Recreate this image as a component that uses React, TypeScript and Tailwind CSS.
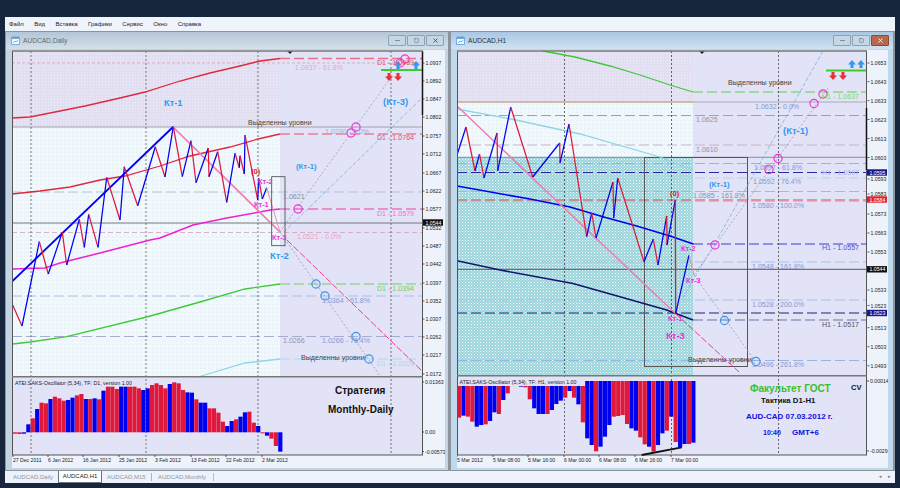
import React from 'react';
import { Minus, Square, X } from 'lucide-react';

type Pt = [number, number];
type Level = [number, string, string?, number?];
type Label = [number, number, string, string, number?, boolean?];
type Bar = [string, number];

const BLUE = '#0000ee';
const RED = '#e0183c';
const MAGENTA = '#f030d8';
const SKY = '#3399ee';
const FIB = '#8299d4';
const DASH = '10 4';
const BAR_STEP = 4.42;

const pts = (p: Pt[]) => p.map((q) => q.join(',')).join(' ');

const Curve = ({ p, color, w = 1.3, dash }: { p: Pt[]; color: string; w?: number; dash?: string }) => (
  <polyline points={pts(p)} fill="none" stroke={color} strokeWidth={w} strokeDasharray={dash} />
);

const Zigzag = ({ p }: { p: Pt[] }) => (
  <g>
    {p.slice(1).map((q, i) => (
      <line
        key={i}
        x1={p[i][0]}
        y1={p[i][1]}
        x2={q[0]}
        y2={q[1]}
        stroke={q[1] < p[i][1] ? BLUE : RED}
        strokeWidth={1.25}
      />
    ))}
  </g>
);

const Levels = ({ items, x1, x2 }: { items: Level[]; x1: number; x2: number }) => (
  <g>
    {items.map(([y, color, dash, w], i) => (
      <line key={i} x1={x1} y1={y} x2={x2} y2={y} stroke={color} strokeDasharray={dash} strokeWidth={w ?? 1} />
    ))}
  </g>
);

const Labels = ({ items }: { items: Label[] }) => (
  <g>
    {items.map(([x, y, text, color, size, bold], i) => (
      <text key={i} x={x} y={y} fill={color} fontSize={size ?? 7.1} fontWeight={bold ? 700 : 400} dominantBaseline="central">
        {text}
      </text>
    ))}
  </g>
);

const Rings = ({ items, color }: { items: Pt[]; color: string }) => (
  <g>
    {items.map(([x, y], i) => (
      <circle key={i} cx={x} cy={y} r={4.1} fill="none" stroke={color} strokeWidth={1.2} />
    ))}
  </g>
);

const Arrow = ({ x, y, color, down }: { x: number; y: number; color: string; down?: boolean }) => (
  <path
    d={
      down
        ? `M${x - 1.5} ${y - 4}h3v3.5h2.5l-4 4.5l-4-4.5h2.5z`
        : `M${x - 1.5} ${y + 4}h3v-3.5h2.5l-4-4.5l-4 4.5h2.5z`
    }
    fill={color}
  />
);

const AxisTicks = ({ x, items }: { x: number; items: [string, number][] }) => (
  <g>
    {items.map(([text, y]) => (
      <g key={text}>
        <line x1={x - 3} x2={x - 1} y1={y} y2={y} stroke="#333" strokeWidth={0.8} />
        <text x={x} y={y} fontSize={5.2} fill="#222" dominantBaseline="central">
          {text}
        </text>
      </g>
    ))}
  </g>
);

const TimeAxis = ({ y, items }: { y: number; items: [string, number][] }) => (
  <g>
    {items.map(([text, x]) => (
      <g key={text}>
        <line x1={x} x2={x} y1={y - 5} y2={y - 3} stroke="#333" strokeWidth={0.8} />
        <text x={x} y={y} fontSize={5.1} fill="#222" dominantBaseline="central">
          {text}
        </text>
      </g>
    ))}
  </g>
);

const PriceTag = ({ x, y, text, color }: { x: number; y: number; text: string; color: string }) => (
  <g>
    <rect x={x} y={y - 3.2} width={20} height={6.4} fill={color} />
    <text x={x + 2.5} y={y} fontSize={5.2} fill="#fff" dominantBaseline="central">
      {text}
    </text>
  </g>
);

const DitherDefs = ({ id }: { id: string }) => (
  <defs>
    <pattern id={`${id}-teal`} width="3" height="3" patternUnits="userSpaceOnUse">
      <rect width="3" height="3" fill="#9ad4dc" />
      <rect width="1" height="1" fill="#ffffff" />
      <rect x="1.5" y="1.5" width="1" height="1" fill="#e4f5f2" />
    </pattern>
    <pattern id={`${id}-purple`} width="3" height="3" patternUnits="userSpaceOnUse">
      <rect width="3" height="3" fill="#e2dff2" />
      <rect width="1" height="1" fill="#f0eef8" />
    </pattern>
    <pattern id={`${id}-pale`} width="4" height="4" patternUnits="userSpaceOnUse">
      <rect width="4" height="4" fill="#f1f8fc" />
      <rect width="1" height="1" fill="#dfeaf2" />
    </pattern>
  </defs>
);

const dailyZigzag: Pt[] = [
  [12.7, 305], [22, 326], [39.3, 241.7], [48.3, 274], [62.3, 232.3], [66.7, 265], [79.3, 219.3], [84.3, 247.3],
  [88.7, 214.3], [98, 247.3], [106.7, 177.3], [120, 220], [124.3, 166.7], [137.7, 205.7], [155.3, 146.7], [165, 177],
  [173.3, 126.7], [182.3, 176.7], [191, 140.7], [196, 182.7], [208.3, 148], [209, 176.7], [217.7, 151.7], [226.7, 202.3],
  [235, 153.3], [239.3, 167.7], [240, 155.7], [244.3, 174], [245, 135], [257.7, 200], [258.7, 178.3], [262.3, 199], [266.7, 187.7],
];

const hourZigzag: Pt[] = [
  [457, 155], [466, 127], [475, 171], [479.5, 154], [484, 178], [497, 133], [497.7, 171], [510.7, 107], [532.7, 177],
  [559.7, 143], [560, 163], [569, 124], [586.7, 236.7], [591.7, 213], [596, 238], [613, 182], [613.7, 218], [617.7, 178],
  [644, 261.7], [653.3, 239], [658, 265], [666.7, 216], [667, 245], [675.3, 200], [675.7, 313.3], [689, 255],
];

const R = RED;
const B = BLUE;

const dailyBars: Bar[] = [
  [R, 581], [R, 582], [B, 581], [B, 553], [R, 535], [B, 507], [R, 488], [R, 490], [B, 477], [R, 470], [R, 475], [R, 482],
  [B, 480], [B, 473], [R, 466], [R, 462], [B, 477], [R, 477], [B, 475], [R, 478], [B, 452], [R, 440], [R, 440], [R, 447],
  [B, 440], [B, 440], [R, 440], [R, 440], [R, 445], [B, 450], [B, 445], [R, 435], [R, 430], [R, 435], [R, 445], [B, 432],
  [R, 427], [R, 430], [R, 450], [B, 457], [B, 458], [R, 478], [B, 488], [B, 488], [R, 505], [R, 505], [R, 518], [R, 545],
  [B, 558], [B, 543], [R, 538], [B, 530], [B, 517], [R, 515], [R, 548], [B, 558], [R, 580], [B, 587], [R, 596], [R, 618], [B, 635],
];

const hourBars: Bar[] = [
  [R, 533], [B, 527], [R, 530], [R, 545], [B, 560], [B, 555], [R, 553], [B, 543], [B, 517], [R, 522], [B, 480], [R, 460],
  [R, 425], [B, 436], [B, 440], [R, 442], [R, 478], [B, 505], [B, 522], [B, 522], [R, 522], [B, 510], [B, 492], [B, 482],
  [R, 473], [B, 453], [R, 473], [B, 493], [R, 547], [B, 595], [B, 615], [R, 634], [B, 620], [B, 590], [B, 555], [R, 530],
  [R, 528], [R, 525], [R, 552], [B, 565], [B, 572], [R, 592], [R, 613], [B, 620], [R, 635], [B, 615], [B, 580], [R, 572],
  [B, 530], [R, 606], [B, 622], [B, 612], [R, 612], [B, 608],
];

const dailyPrices: [string, number][] = [
  ['1.0937', 63], ['1.0892', 81], ['1.0847', 99], ['1.0802', 117], ['1.0757', 136], ['1.0712', 154], ['1.0667', 173],
  ['1.0622', 191], ['1.0577', 209], ['1.0532', 228], ['1.0487', 246], ['1.0442', 264], ['1.0397', 283], ['1.0352', 301],
  ['1.0307', 319], ['1.0262', 337], ['1.0217', 355], ['1.0172', 374],
];

const hourPrices: [string, number][] = [
  ['1.0653', 63], ['1.0643', 81.7], ['1.0633', 100.7], ['1.0623', 119.5], ['1.0613', 138.5], ['1.0603', 157.5],
  ['1.0593', 179], ['1.0583', 194], ['1.0573', 214], ['1.0563', 233], ['1.0553', 252], ['1.0533', 290], ['1.0523', 305.5],
  ['1.0513', 327.7], ['1.0503', 346.7], ['1.0493', 365.7],
];

const DailyChart = () => (
  <svg viewBox="12 50 433 418" width={433} height={418} className="block shrink-0">
    <DitherDefs id="d" />
    <rect x="12" y="50" width="433" height="418" fill="#eef2fb" />
    <rect x="12" y="51" width="268" height="76" fill="url(#d-purple)" />
    <rect x="12" y="127" width="268" height="250" fill="url(#d-pale)" />
    <rect x="280" y="51" width="143" height="326" fill="#e3e3f7" />
    <rect x="12" y="377" width="411" height="78" fill="#e3e3f7" />

    <Levels
      x1={12}
      x2={423}
      items={[
        [63, '#dca0b4', '3 2', 0.8],
        [127, '#a0a0a8', undefined, 1],
        [192, '#b4c4d8', DASH, 1.2],
        [223, '#77777c', undefined, 1],
        [232.5, '#d8a0c0', '5 3', 0.8],
        [296, '#a4c4e8', DASH, 1.2],
        [336.5, '#a8acd0', DASH, 1.2],
      ]}
    />
    <Levels
      x1={280}
      x2={423}
      items={[
        [58.5, '#e87088', DASH, 1.4],
        [134, '#e88098', DASH, 1.4],
        [209, '#f070c8', DASH, 1.4],
        [284, '#70d060', DASH, 1.1],
        [359, '#b0dcec', DASH, 1.1],
      ]}
    />
    {[31, 146, 258, 391].map((x) => (
      <line key={x} x1={x} x2={x} y1={51} y2={455} stroke={x === 146 ? '#6a5a50' : '#555'} strokeDasharray="2 2" strokeWidth={0.8} />
    ))}

    <Curve p={[[12, 118], [30, 117], [60, 111], [85, 106], [120, 98], [145, 92], [180, 81], [210, 73], [240, 66], [260, 61], [280, 58.5]]} color="#e0283c" />
    <Curve p={[[12, 194], [40, 191], [70, 187], [100, 180], [125, 176], [160, 166], [190, 156], [230, 147], [258, 139], [280, 134]]} color="#e0283c" />
    <Curve p={[[12, 269], [45, 268], [60, 263], [100, 253], [150, 240], [160, 238], [193, 225], [226.7, 218], [260, 212], [270, 210], [280, 209]]} color="#f020d0" w={1.5} />
    <Curve p={[[12.7, 344], [30, 342], [66.7, 336.7], [146.7, 317], [200, 302], [245, 289], [280, 284]]} color="#40c838" />
    <Curve p={[[198, 377], [245, 363], [280, 359]]} color="#90d4e8" />

    <Curve p={[[280, 232], [392, 76]]} color="#9a9ab0" w={0.8} dash="2 2" />
    <Curve p={[[284, 232], [422, 98]]} color="#7ab0e0" w={0.8} dash="4 2" />
    <Curve p={[[280, 232], [380, 376]]} color="#9a9ab0" w={0.8} dash="2 2" />
    <Curve p={[[287, 240], [422.7, 371.7]]} color="#ee3c98" w={1} dash="7 2" />

    <Curve p={[[12, 281.5], [173, 127]]} color={BLUE} w={1.8} />
    <Curve p={[[173, 127], [280, 232]]} color="#f07cb0" w={1.7} />
    <Zigzag p={dailyZigzag} />
    <Curve p={[[266.7, 187.7], [280, 232]]} color="#f08ca8" w={1} />

    <rect x="271.7" y="176.7" width="13.3" height="69" fill="none" stroke="#444" strokeWidth={0.8} />
    <Rings items={[[405, 59], [400, 63], [356, 127], [351, 133], [298, 209]]} color={MAGENTA} />
    <Rings items={[[316, 284], [325, 296], [356, 336.5], [369, 359]]} color="#3c94e8" />

    <line x1="381" x2="422" y1="70" y2="70" stroke="#38d028" strokeWidth={1.8} />
    <Arrow x={398} y={65} color={SKY} />
    <Arrow x={416} y={65} color={SKY} />
    <Arrow x={389} y={77} color="#e83038" down />
    <Arrow x={398} y={77} color="#e83038" down />
    <path d="M287 51h6l-3 3z" fill="#222" />

    <Labels
      items={[
        [377, 63, 'D1 - 1.0989', '#e8506c'],
        [295, 68, '1.0937 - 61.8%', '#eca4b8'],
        [164, 103, 'Кт-1', SKY, 9.3, true],
        [383, 101, '(Кт-3)', SKY, 9.5, true],
        [248, 123, 'Выделенны уровни', '#444'],
        [325, 132, '1.0280 - 0.0%', '#9cb0dc'],
        [377, 138, 'D1 - 1.0764', '#e8506c'],
        [296, 166, '(Кт-1)', SKY, 7.8, true],
        [251, 171, '(0)', '#e0183c', 7.5, true],
        [258, 181, 'Кт-2', MAGENTA, 7.4, true],
        [283, 197, '1.0621', '#8c8c98'],
        [254, 204, 'Кт-1', MAGENTA, 7.4, true],
        [377, 214, 'D1 - 1.0579', '#f070c8'],
        [297, 237, '1.0521 - 0.0%', '#eca4b8'],
        [272, 237, 'Кт-3', MAGENTA, 7.4, true],
        [270, 255, 'Кт-2', SKY, 9.5, true],
        [377, 289, 'D1 - 1.0394', '#70d060'],
        [322, 301, '1.0364 - 61.8%', FIB],
        [283, 341, '1.0266', '#9494a4'],
        [322, 341, '1.0266 - 76.4%', FIB],
        [301, 358, 'Выделенны уровни', '#444'],
        [377, 364, 'D1 - 1.0209', '#a8d8e8'],
      ]}
    />

    <line x1="12.5" x2="12.5" y1="51" y2="455" stroke="#555" />
    <line x1="422.5" x2="422.5" y1="51" y2="455" stroke="#555" />
    <line x1="422.5" x2="422.5" y1="51" y2="115" stroke="#111" strokeWidth={1.5} />
    <line x1="12" x2="423" y1="51" y2="51" stroke="#777" strokeWidth={1.5} />
    <line x1="12" x2="423" y1="376.8" y2="376.8" stroke="#777" strokeWidth={1.4} />
    <line x1="12" x2="423" y1="455" y2="455" stroke="#555" />

    {dailyBars.map(([c, v], i) => {
      const y = 240 + v / 3;
      return <rect key={i} x={13 + i * BAR_STEP} y={Math.min(y, 432.3)} width={4.2} height={Math.abs(y - 432.3)} fill={c} />;
    })}
    <Labels
      items={[
        [15, 383, 'ATEI.SAKS-Oscillator (5,34), TF: D1, version 1.00', '#222', 5.3],
        [335, 390, 'Стратегия', '#111', 10, true],
        [328, 409, 'Monthly-Daily', '#111', 10, true],
      ]}
    />
    <AxisTicks x={425.5} items={dailyPrices} />
    <AxisTicks x={425} items={[['0.01363', 382], ['0.00', 432], ['-0.00573', 451.5]]} />
    <PriceTag x={423} y={222.5} text="1.0544" color="#111" />
    <TimeAxis
      y={460}
      items={[
        ['27 Dec 2011', 13], ['6 Jan 2012', 48], ['16 Jan 2012', 83], ['25 Jan 2012', 119],
        ['3 Feb 2012', 155], ['13 Feb 2012', 191], ['22 Feb 2012', 226], ['2 Mar 2012', 262],
      ]}
    />
  </svg>
);

const HourChart = () => (
  <svg viewBox="457 50 431 418" width={431} height={418} className="block shrink-0">
    <DitherDefs id="h" />
    <rect x="457" y="50" width="431" height="418" fill="#eef2fb" />
    <rect x="457" y="51" width="236" height="51" fill="url(#h-purple)" />
    <rect x="457" y="102" width="236" height="55" fill="url(#h-pale)" />
    <rect x="457" y="157" width="236" height="219" fill="url(#h-teal)" />
    <rect x="693" y="51" width="173" height="325" fill="#e3e3f7" />
    <rect x="457" y="376" width="409" height="79" fill="#e3e3f7" />

    <Levels
      x1={457}
      x2={866}
      items={[
        [102, '#a8a8b0', undefined, 1],
        [115.5, '#a0a0ac', DASH, 1.2],
        [145, '#c8b4c4', DASH, 1.2],
        [157.3, '#8c8c94', undefined, 1],
        [163.5, '#a0aee0', DASH, 1.2],
        [172.5, '#2828a0', DASH, 1.2],
        [178, '#b4d4ec', DASH, 1.2],
        [191.5, '#b4b4c0', DASH, 1.2],
        [200, '#e04850', DASH, 1.2],
        [201.5, '#a0c4e8', DASH, 0.8],
        [262, '#a4c4e4', DASH, 1.2],
        [269.3, '#55555a', undefined, 1],
        [300, '#a4c4e4', DASH, 1.2],
        [313, '#20207c', DASH, 1.2],
        [360.5, '#98b4e0', DASH, 1.2],
      ]}
    />
    <line x1="457" x2="693" y1="102" y2="102" stroke="#d8a880" />
    <Levels
      x1={693}
      x2={866}
      items={[
        [92, '#60d050', DASH, 1.1],
        [244, '#3c3ce0', DASH, 1.2],
        [320, '#9898c0', DASH, 1.4],
      ]}
    />
    {[564.5, 671.5, 778.5].map((x) => (
      <line key={x} x1={x} x2={x} y1={51} y2={455} stroke="#444" strokeDasharray="2 2" strokeWidth={0.8} />
    ))}

    <rect x="644.5" y="157.5" width="103" height="209" fill="none" stroke="#55555a" strokeWidth={1} />

    <Curve p={[[543, 51], [575, 57], [610, 66], [640, 75], [670, 85], [693, 92]]} color="#40c838" />
    <Curve p={[[457, 109], [516, 120], [580, 134], [660, 157], [693, 170]]} color="#90d4e4" />
    <Curve p={[[457, 186], [530, 199], [570, 207], [603, 216.7], [636.7, 226], [670, 236], [693.3, 244]]} color={BLUE} w={1.6} />
    <Curve p={[[457, 260.7], [500, 270], [573, 283.5], [620, 296.7], [666.7, 310], [693, 320]]} color="#14146c" w={1.6} />
    <Curve p={[[457, 106], [563, 207], [675, 313]]} color="#f07cb0" w={1.6} />
    <Curve p={[[675, 313], [739, 372]]} color="#ee3c98" w={1} dash="7 2" />

    <Curve p={[[718, 238], [823, 51]]} color="#7ab0e0" w={0.8} dash="4 2" />
    <Curve p={[[683, 298], [706.7, 256.7], [715, 245]]} color="#7ab0e0" w={0.8} dash="4 2" />
    <Curve p={[[694, 275], [828, 88]]} color="#9a9ab0" w={0.8} dash="2 2" />
    <Curve p={[[694, 275], [755, 361]]} color="#9a9ab0" w={0.8} dash="2 2" />

    <Zigzag p={hourZigzag} />
    <Curve p={[[689, 255], [694, 275]]} color="#f08ca8" w={1} />

    <Rings items={[[823, 94], [814, 103.5], [778, 158.5], [769, 169.5], [715, 245]]} color={MAGENTA} />
    <Rings items={[[724.5, 320.5], [756, 361.5]]} color="#3c94e8" />

    <line x1="826" x2="866" y1="70.5" y2="70.5" stroke="#38d028" strokeWidth={1.8} />
    <Arrow x={852} y={64} color={SKY} />
    <Arrow x={861} y={64} color={SKY} />
    <Arrow x={833} y={76} color="#e83038" down />
    <Arrow x={843} y={76} color="#e83038" down />
    <path d="M699 51h6l-3 3z" fill="#222" />

    <Labels
      items={[
        [728, 83, 'Выделенны уровни', '#444'],
        [822, 97, 'H1 - 1.0637', '#80d868'],
        [755, 107, '1.0632 - 0.0%', FIB],
        [696, 120, '1.0625', '#9494a4'],
        [783, 130, '(Кт-1)', SKY, 9.5, true],
        [696, 150, '1.0610', '#9494a4'],
        [754, 168, '1.0597 - 61.8%', FIB],
        [822, 173, 'H1 - 1.0597', '#b0b8e4'],
        [753, 182, '1.0592 - 76.4%', FIB],
        [709, 184, '(Кт-1)', SKY, 7.8, true],
        [670, 193, '(0)', '#e0183c', 7.5, true],
        [693, 196, '1.0585 - 161.8%', '#8c94a8'],
        [752, 206, '1.0580 - 100.0%', FIB],
        [681, 248, 'Кт-2', MAGENTA, 7.4, true],
        [822, 248, 'H1 - 1.0557', '#5050d8'],
        [752, 266.5, '1.0548 - 161.8%', FIB],
        [686, 280, 'Кт-3', MAGENTA, 7.4, true],
        [752, 304.5, '1.0528 - 200.0%', FIB],
        [668, 318, 'Кт-1', MAGENTA, 7.4, true],
        [822, 325, 'H1 - 1.0517', '#55555f'],
        [666, 335, 'Кт-3', MAGENTA, 9.5, true],
        [688, 360, 'Выделенны уровни', '#444'],
        [752, 365, '1.0496 - 261.8%', FIB],
      ]}
    />

    <line x1="457.5" x2="457.5" y1="51" y2="455" stroke="#555" />
    <line x1="866.5" x2="866.5" y1="51" y2="455" stroke="#555" />
    <line x1="866.5" x2="866.5" y1="108" y2="170" stroke="#111" strokeWidth={1.5} />
    <line x1="457" x2="867" y1="51" y2="51" stroke="#777" strokeWidth={1.5} />
    <line x1="457" x2="867" y1="375.8" y2="375.8" stroke="#777" strokeWidth={1.4} />
    <line x1="457" x2="867" y1="455" y2="455" stroke="#555" />

    {hourBars.map(([c, v], i) => (
      <rect key={i} x={457 + i * BAR_STEP} y={381} width={4.2} height={v / 3 + 240 - 381} fill={c} />
    ))}
    <rect x="458" y="377" width="127" height="9" fill="#e3e3f7" />
    <line x1="641.7" y1="455" x2="681.7" y2="447.3" stroke="#111" strokeWidth={1.8} />
    <Labels
      items={[
        [459.5, 382, 'ATEI.SAKS-Oscillator (5,34), TF: H1, version 1.00', '#222', 5.3],
        [750, 388, 'Факультет ГОСТ', '#38c030', 10, true],
        [851, 387, 'CV', '#111', 7.5, true],
        [761, 400, 'Тактика  D1-H1', '#111', 7.8, true],
        [746, 416, 'AUD-CAD 07.03.2012 г.', '#1010e0', 8, true],
        [763, 432, '10:40', '#1010e0', 7, true],
        [792, 432, 'GMT+6', '#1010e0', 8, true],
      ]}
    />
    <AxisTicks x={870.5} items={hourPrices} />
    <AxisTicks x={870} items={[['0.00014', 381], ['-0.0029', 451]]} />
    <PriceTag x={867} y={172.5} text="1.0595" color="#18188c" />
    <PriceTag x={867} y={199.5} text="1.0584" color="#e02030" />
    <PriceTag x={867} y={269.3} text="1.0544" color="#111" />
    <PriceTag x={867} y={313} text="1.0523" color="#18188c" />
    <TimeAxis
      y={460}
      items={[
        ['5 Mar 2012', 457], ['5 Mar 08:00', 493], ['5 Mar 16:00', 528], ['6 Mar 00:00', 564],
        ['6 Mar 08:00', 599], ['6 Mar 16:00', 635], ['7 Mar 00:00', 671],
      ]}
    />
  </svg>
);

const WindowIcon = () => (
  <svg width="9" height="9" viewBox="0 0 9 9" className="shrink-0">
    <rect x="0.5" y="0.5" width="8" height="2" fill="#5fa0e0" />
    <rect x="0.5" y="2.5" width="8" height="6" fill="#f4f8fc" stroke="#5fa0e0" strokeWidth="0.8" />
    <path d="M2 7l2-2l1 1l2-2" fill="none" stroke="#5fa0e0" strokeWidth="0.8" />
  </svg>
);

const ChartWindow = ({ title, active, children }: { title: string; active?: boolean; children: React.ReactNode }) => (
  <div className={`flex h-full w-[444px] flex-col border border-[#8b949c] ${active ? 'bg-[#bfd8ec]' : 'bg-[#c4d4e2]'}`}>
    <div
      className={`flex h-[17px] shrink-0 items-center pl-[5px] pr-[4px] ${
        active ? 'bg-gradient-to-b from-[#a9c6e2] to-[#cfe2f1]' : 'bg-gradient-to-b from-[#b4c5d6] to-[#d3e0ea]'
      }`}
    >
      <WindowIcon />
      <span className={`ml-[3px] text-[6.6px] ${active ? 'text-[#27323e]' : 'text-[#5b6b7a]'}`}>{title}</span>
      <div className="ml-auto flex items-center gap-[1px]">
        <span className="flex h-[11px] w-[18px] items-center justify-center rounded-[1px] border border-[#8ea3b6] bg-[#c5d6e4] text-[#44525e]">
          <Minus size={7} />
        </span>
        <span className="flex h-[11px] w-[18px] items-center justify-center rounded-[1px] border border-[#8ea3b6] bg-[#c5d6e4] text-[#44525e]">
          <Square size={5} />
        </span>
        <span
          className={`flex h-[11px] w-[18px] items-center justify-center rounded-[1px] border ${
            active ? 'border-[#8a4a34] bg-[#b9684e] text-white' : 'border-[#8ea3b6] bg-[#c5d6e4] text-[#44525e]'
          }`}
        >
          <X size={7} strokeWidth={3} />
        </span>
      </div>
    </div>
    <div className="flex flex-1 pl-[6px] pt-[1px]">{children}</div>
  </div>
);

const MENU = ['Файл', 'Вид', 'Вставка', 'Графики', 'Сервис', 'Окно', 'Справка'];

export default function App() {
  return (
    <div className="flex h-[488px] w-[900px] flex-col overflow-hidden bg-[#17263d] px-[5px] pb-[5px] pt-[17px] font-['Liberation_Sans',Arial,sans-serif]">
      <div className="flex h-[14px] shrink-0 items-center gap-[10.4px] bg-[#eff3fb] pl-[4px] text-[6px] text-[#222]">
        {MENU.map((m) => (
          <span key={m}>{m}</span>
        ))}
      </div>
      <div className="flex h-[440px] shrink-0 gap-[1px] bg-[#8b949c]">
        <ChartWindow title="AUDCAD,Daily">
          <DailyChart />
        </ChartWindow>
        <ChartWindow title="AUDCAD,H1" active>
          <HourChart />
        </ChartWindow>
      </div>
      <div className="flex flex-1 items-stretch bg-[#eef2fa] text-[6px] text-[#8a97a6]">
        <span className="flex w-[53px] items-center pl-[8px]">AUDCAD,Daily</span>
        <span className="flex w-[44px] items-center justify-center border border-[#6a7480] border-t-0 bg-white text-[#222]">AUDCAD,H1</span>
        <span className="flex w-[49px] items-center pl-[5px]">AUDCAD,M15</span>
        <span className="my-[2px] w-px bg-[#aab4c0]" />
        <span className="flex w-[61px] items-center pl-[6px]">AUDCAD,Monthly</span>
        <span className="my-[2px] w-px bg-[#c8c0a8]" />
        <span className="ml-auto flex items-center gap-[6px] pr-[4px] text-[5px] text-[#777]">
          <span>◂</span>
          <span>▸</span>
        </span>
      </div>
    </div>
  );
}
